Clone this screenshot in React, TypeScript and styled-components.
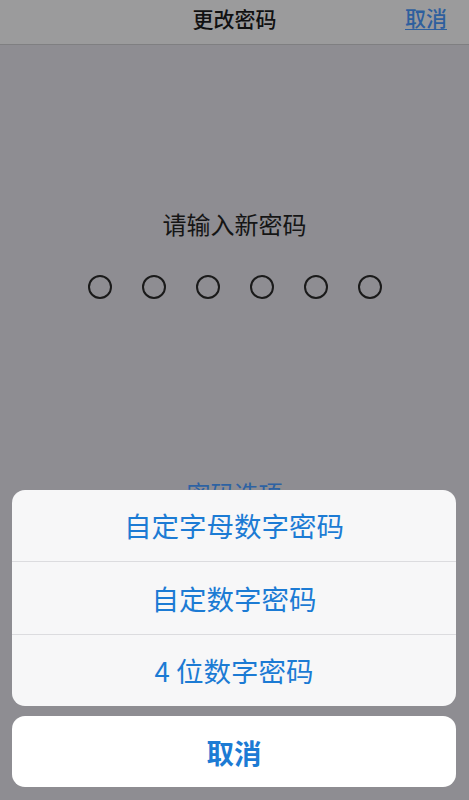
import styled, { createGlobalStyle } from "styled-components";

const GlobalStyle = createGlobalStyle`
  html, body {
    margin: 0;
    padding: 0;
    background: #8e8d92;
  }
  body {
    font-family: "Noto Sans CJK SC", "Noto Sans", "Liberation Sans", sans-serif;
  }
`;

const options = ["自定字母数字密码", "自定数字密码", "4 位数字密码"];

const App = () => {
  return (
    <Screen>
      <GlobalStyle />
      <NavBar>
        <Title>更改密码</Title>
        <NavAction>取消</NavAction>
      </NavBar>
      <Body>
        <Prompt>请输入新密码</Prompt>
        <Dots>
          {Array.from({ length: 6 }).map((_, i) => (
            <Dot key={i} />
          ))}
        </Dots>
        <OptionsLink>密码选项</OptionsLink>
      </Body>
      <Sheet>
        <Group>
          {options.map((label) => (
            <Option key={label}>{label}</Option>
          ))}
        </Group>
        <CancelButton>取消</CancelButton>
      </Sheet>
    </Screen>
  );
};

export default App;

const Screen = styled.div`
  position: relative;
  width: 469px;
  height: 800px;
  overflow: hidden;
  background: #8e8d92;
`;

const NavBar = styled.div`
  position: relative;
  height: 44px;
  background: #9b9b9c;
  border-bottom: 1px solid #7f7f81;
  display: flex;
  align-items: center;
  justify-content: center;
`;

const Title = styled.div`
  font-size: 21px;
  font-weight: 500;
  color: #111;
  margin-top: -8px;
`;

const NavAction = styled.div`
  position: absolute;
  right: 22px;
  top: 2px;
  font-size: 21px;
  font-weight: 500;
  color: #2e5f9e;
  text-decoration: underline;
  text-underline-offset: 3px;
  text-decoration-thickness: 1px;
  line-height: 30px;
`;

const Body = styled.div`
  display: flex;
  flex-direction: column;
  align-items: center;
  padding-top: 163px;
`;

const Prompt = styled.div`
  font-size: 24px;
  line-height: 32px;
  color: #151515;
`;

const Dots = styled.div`
  display: flex;
  gap: 30px;
  margin-top: 35px;
`;

const Dot = styled.div`
  width: 24px;
  height: 24px;
  box-sizing: border-box;
  border: 2px solid #1a1a1a;
  border-radius: 50%;
`;

const OptionsLink = styled.div`
  margin-top: 178px;
  font-size: 24px;
  line-height: 32px;
  color: #2d62a3;
`;

const Sheet = styled.div`
  position: absolute;
  left: 12px;
  right: 13px;
  bottom: 13px;
  display: flex;
  flex-direction: column;
  gap: 10px;
`;

const Group = styled.div`
  background: #f7f7f8;
  border-radius: 13px;
  overflow: hidden;
`;

const Option = styled.div`
  height: 71.5px;
  display: flex;
  align-items: center;
  justify-content: center;
  font-size: 27.5px;
  color: #1c7bd4;
  & + & {
    border-top: 1px solid #dcdcdf;
  }
`;

const CancelButton = styled.div`
  height: 71px;
  background: #ffffff;
  border-radius: 13px;
  display: flex;
  align-items: center;
  justify-content: center;
  font-size: 27.5px;
  font-weight: 700;
  color: #1c7bd4;
`;
